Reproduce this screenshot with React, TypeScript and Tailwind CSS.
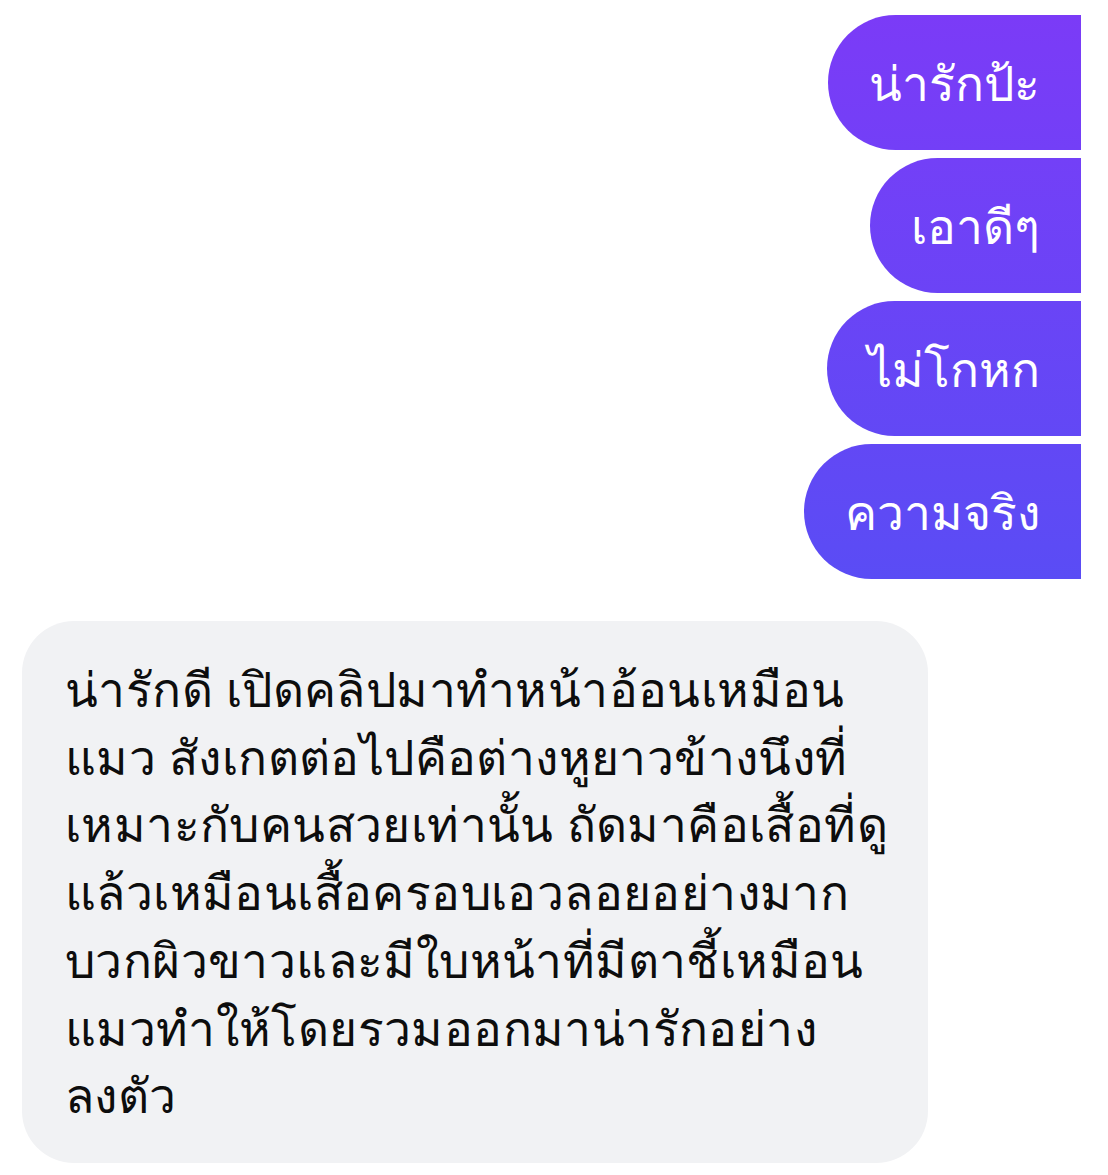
import React from 'react';

// each bubble takes its slice of one gradient running down the whole stack
const replies = [
  { text: 'น่ารักป้ะ', corner: 'rounded-l-full rounded-tr-[46px] rounded-br-[8px]', bg: 'from-[#7b3bf7] to-[#733ff7]' },
  { text: 'เอาดีๆ', corner: 'rounded-l-full rounded-tr-[8px] rounded-br-[8px]', bg: 'from-[#7340f7] to-[#6b43f6]' },
  { text: 'ไม่โกหก', corner: 'rounded-l-full rounded-tr-[8px] rounded-br-[8px]', bg: 'from-[#6a44f6] to-[#6248f5]' },
  { text: 'ความจริง', corner: 'rounded-l-full rounded-tr-[8px] rounded-br-[46px]', bg: 'from-[#6248f5] to-[#5a4cf5]' },
];

const lines = [
  'น่ารักดี เปิดคลิปมาทำหน้าอ้อนเหมือน',
  'แมว สังเกตต่อไปคือต่างหูยาวข้างนึงที่',
  'เหมาะกับคนสวยเท่านั้น ถัดมาคือเสื้อที่ดู',
  'แล้วเหมือนเสื้อครอบเอวลอยอย่างมาก',
  'บวกผิวขาวและมีใบหน้าที่มีตาชี้เหมือน',
  'แมวทำให้โดยรวมออกมาน่ารักอย่าง',
  'ลงตัว',
];

export default function App() {
  return (
    <div className="w-[1108px] h-[1175px] bg-white overflow-hidden" style={{ fontFamily: '"Noto Sans", sans-serif' }}>
      {/* Outgoing messages */}
      <div className="flex flex-col items-end gap-2 pt-[15px] pr-[27px]">
        {replies.map((r, i) => (
          <div
            key={i}
            className={`h-[135px] px-[41px] flex items-center text-white text-[48px] bg-gradient-to-b ${r.bg} ${r.corner}`}
          >
            {r.text}
          </div>
        ))}
      </div>

      {/* Incoming message */}
      <div className="mt-[42px] ml-[22px] w-[906px] rounded-[52px] bg-[#f1f2f4] pl-[43px] py-[34px] text-[48px] tracking-[0.4px] leading-[67.7px] text-[#0d0d0d]">
        {lines.map((l, i) => (
          <div key={i} className="whitespace-nowrap">{l}</div>
        ))}
      </div>
    </div>
  );
}
